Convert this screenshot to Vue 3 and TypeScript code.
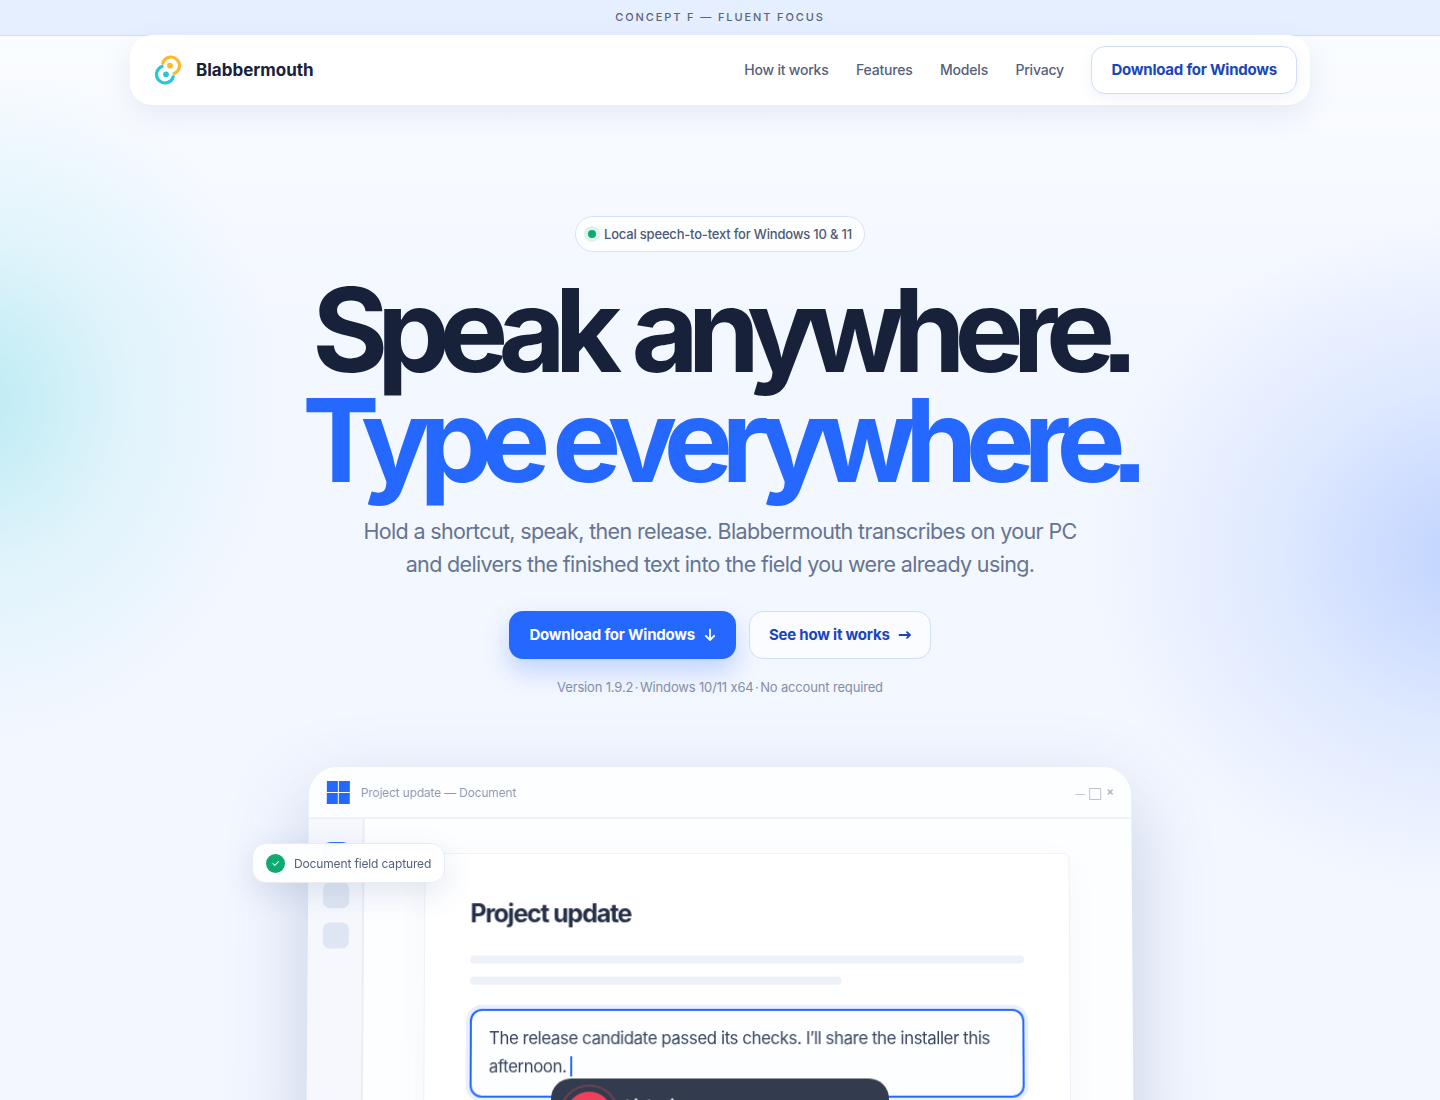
<template>
  <div class="page">
    <div class="strip">CONCEPT F — FLUENT FOCUS</div>

    <header class="nav">
      <a class="brand" href="#">
        <svg class="logo" width="28" height="30" viewBox="0 0 28 30" fill="none">
          <path d="M8.8 8.2A8.5 8.5 0 1 1 20 18.5" stroke="#fdb92e" stroke-width="3.2" stroke-linecap="round" />
          <circle cx="16" cy="10.7" r="2.9" fill="#fdb92e" />
          <path d="M8 11.5A8.5 8.5 0 1 0 19.2 21.8" stroke="#27c6dc" stroke-width="3.2" stroke-linecap="round" />
          <circle cx="12" cy="19.3" r="2.9" fill="#27c6dc" />
        </svg>
        <span>Blabbermouth</span>
      </a>
      <nav class="links">
        <a v-for="link in links" :key="link" class="link" href="#">{{ link }}</a>
        <a class="nav-cta" href="#">Download for Windows</a>
      </nav>
    </header>

    <section class="hero">
      <div class="pill"><span class="dot"></span>Local speech-to-text for Windows 10 &amp; 11</div>
      <h1>Speak anywhere<span class="stop">.</span><br /><em>Type everywhere<span class="stop">.</span></em></h1>
      <p class="lede">
        Hold a shortcut, speak, then release. Blabbermouth transcribes on your PC<br />
        and delivers the finished text into the field you were already using.
      </p>
      <div class="actions">
        <a class="btn primary" href="#">
          Download for Windows
          <svg width="14" height="14" viewBox="0 0 14 14" fill="none" stroke="currentColor" stroke-width="1.8" stroke-linecap="round" stroke-linejoin="round"><path d="M7 1.5v10.5M2.8 7.8 7 12l4.2-4.2" /></svg>
        </a>
        <a class="btn secondary" href="#">
          See how it works
          <svg width="14" height="14" viewBox="0 0 14 14" fill="none" stroke="currentColor" stroke-width="1.8" stroke-linecap="round" stroke-linejoin="round"><path d="M1.5 7h10.5M9 4.2 12 7 9 9.8" /></svg>
        </a>
      </div>
      <p class="meta">Version 1.9.2 <span class="sep">·</span> Windows 10/11 x64 <span class="sep">·</span> No account required</p>
    </section>

    <section class="stage">
      <div class="window">
        <div class="titlebar">
          <span class="win-logo"><i></i><i></i><i></i><i></i></span>
          <span class="win-title">Project update — Document</span>
          <span class="controls"><i class="min"></i><i class="max"></i><i class="close">×</i></span>
        </div>
        <div class="body">
          <aside class="side">
            <span class="side-item active"></span>
            <span class="side-item"></span>
            <span class="side-item"></span>
          </aside>
          <main class="main">
            <div class="doc">
              <h2>Project update</h2>
              <div class="bar"></div>
              <div class="bar short"></div>
              <div class="field">
                The release candidate passed its checks. I’ll share the installer this afternoon.<span class="caret"></span>
              </div>
            </div>
          </main>
        </div>
        <div class="voice">
          <span class="rec"><i></i></span>
          <span class="voice-label">Listening</span>
        </div>
      </div>
      <div class="toast"><span class="tick">✓</span>Document field captured</div>
    </section>
  </div>
</template>

<script setup lang="ts">
const links: string[] = ['How it works', 'Features', 'Models', 'Privacy'];
</script>

<style>
html,
body {
  margin: 0;
  background: #f3f7ff;
  overflow-x: hidden;
}
</style>

<style scoped>
.page {
  min-height: 1100px;
  height: 1100px;
  overflow: hidden;
  font-family: Inter, 'Liberation Sans', sans-serif;
  color: #17213a;
  background:
    radial-gradient(ellipse 300px 340px at -20px 400px, rgba(170, 232, 240, 0.75), rgba(170, 232, 240, 0.25) 50%, rgba(170, 232, 240, 0) 100%),
    radial-gradient(ellipse 380px 340px at 1470px 555px, rgba(186, 207, 255, 0.9), rgba(186, 207, 255, 0.36) 50%, rgba(186, 207, 255, 0) 100%),
    linear-gradient(180deg, #fbfdff 0%, #f3f7ff 30%, #f3f7ff 100%);
}

a {
  text-decoration: none;
  color: inherit;
}

.strip {
  height: 35px;
  line-height: 34px;
  background: #e6efff;
  border-bottom: 1px solid #d5e0f3;
  text-align: center;
  font-size: 11px;
  font-weight: 500;
  letter-spacing: 0.172em;
  color: #58657f;
}

.nav {
  width: 1180px;
  height: 70px;
  margin: -1px auto 0;
  padding: 0 13px 0 24px;
  box-sizing: border-box;
  display: flex;
  align-items: center;
  justify-content: space-between;
  background: #fff;
  border-radius: 22px;
  box-shadow: 0 10px 30px rgba(60, 90, 150, 0.1);
  position: relative;
}

.brand {
  display: flex;
  align-items: center;
  gap: 14px;
  font-size: 17px;
  font-weight: 700;
  color: #17213a;
}

.links {
  display: flex;
  align-items: center;
  gap: 27.5px;
  font-size: 14px;
  font-weight: 500;
  letter-spacing: -0.015em;
  color: #55617b;
}

.link {
  padding-bottom: 2px;
}

.nav-cta {
  height: 48px;
  padding: 0 19px 2px;
  display: flex;
  align-items: center;
  box-sizing: border-box;
  border: 1px solid #cfdefc;
  border-radius: 14px;
  font-size: 15px;
  font-weight: 700;
  letter-spacing: -0.015em;
  color: #1746bd;
  background: #fff;
  box-shadow: 0 4px 14px rgba(60, 90, 150, 0.07);
}

.hero {
  display: flex;
  flex-direction: column;
  align-items: center;
  padding-top: 111px;
}

.pill {
  height: 36px;
  padding: 0 12px 0 8px;
  box-sizing: border-box;
  display: flex;
  align-items: center;
  gap: 4px;
  border: 1px solid #d5e2fb;
  border-radius: 18px;
  background: #fdfeff;
  font-size: 13px;
  font-weight: 500;
  letter-spacing: -0.015em;
  color: #4d5a75;
}

.dot {
  width: 8px;
  height: 8px;
  margin: 0 4px;
  border-radius: 50%;
  background: #10a971;
  box-shadow: 0 0 0 4px #dff3ee;
}

h1 {
  margin: 23px 0 0;
  font-size: 116px;
  line-height: 110px;
  font-weight: 700;
  letter-spacing: -0.095em;
  word-spacing: 4px;
  text-align: center;
  color: #17213a;
  font-feature-settings: 'ss07';
}

h1 em {
  font-style: normal;
  letter-spacing: -0.098em;
  word-spacing: -3px;
  color: #2468ff;
}

.stop {
  margin-left: -4px;
}

.lede {
  margin: 20px 0 0;
  font-size: 21.5px;
  line-height: 33px;
  letter-spacing: -0.03em;
  text-align: center;
  color: #667490;
}

.actions {
  display: flex;
  gap: 13px;
  margin-top: 30px;
}

.btn {
  height: 48px;
  padding: 0 19px 1px 20px;
  box-sizing: border-box;
  display: flex;
  align-items: center;
  gap: 8px;
  border-radius: 14px;
  font-size: 15px;
  font-weight: 700;
  letter-spacing: -0.015em;
}

.primary {
  background: #2468ff;
  color: #fff;
  box-shadow: 0 12px 26px rgba(36, 104, 255, 0.25);
}

.secondary {
  padding: 0 18px 1px 19px;
  background: #fbfcff;
  color: #1746bd;
  border: 1px solid #cfdefc;
}

.meta {
  margin: 19px 0 0;
  font-size: 13px;
  line-height: 18px;
  letter-spacing: -0.012em;
  color: #838ea3;
}

.sep {
  margin: 0 -2px;
}

.stage {
  width: 822px;
  margin: 71px auto 0;
  position: relative;
}

.window {
  height: 640px;
  position: relative;
  box-sizing: border-box;
  background: #fdfeff;
  border-radius: 28px 28px 0 0;
  box-shadow: 0 30px 80px rgba(60, 90, 150, 0.26);
  transform: perspective(2000px) rotateX(2deg);
  transform-origin: 50% 0;
  display: flex;
  flex-direction: column;
}

.titlebar {
  height: 52px;
  flex: none;
  display: flex;
  align-items: center;
  padding: 0 17px 0 18px;
  box-sizing: border-box;
  border-bottom: 2px solid #eef1f8;
}

.win-logo {
  width: 23px;
  height: 23px;
  margin-top: 1px;
  display: grid;
  grid-template-columns: 1fr 1fr;
  gap: 1.5px;
}

.win-logo i {
  background: #2468ff;
}

.win-title {
  margin-left: 11px;
  font-size: 12px;
  letter-spacing: -0.015em;
  color: #8f99ad;
}

.controls {
  margin-left: auto;
  margin-top: 3px;
  display: flex;
  align-items: center;
  gap: 4px;
  color: #aab3c4;
}

.min {
  width: 10px;
  height: 1px;
  margin-top: 2px;
  background: #c3cad6;
}

.max {
  width: 10px;
  height: 10px;
  border: 1px solid #bcc4d2;
}

.close {
  font-style: normal;
  font-size: 12px;
  font-weight: 600;
  line-height: 10px;
  margin-top: -5px;
  margin-left: 1px;
}

.body {
  flex: 1;
  display: flex;
}

.side {
  width: 56px;
  flex: none;
  box-sizing: border-box;
  padding: 23px 0 0 2px;
  display: flex;
  flex-direction: column;
  align-items: center;
  gap: 14px;
  background: #f6f8fd;
  border-right: 2px solid #e9edf6;
}

.side-item {
  width: 26px;
  height: 26px;
  border-radius: 7px;
  background: #dfe6f3;
}

.side-item.active {
  background: #e6eefe;
  box-shadow: inset 2px 2px 0 #2468ff;
}

.main {
  flex: 1;
  padding: 34px 62px 0 60px;
  background: #fdfeff;
}

.doc {
  height: 100%;
  padding: 37px 45px 0;
  box-sizing: border-box;
  background: #fff;
  border: 1px solid #eef1f8;
  border-radius: 6px 6px 0 0;
  box-shadow: 0 10px 30px rgba(60, 90, 150, 0.05);
}

h2 {
  margin: 0;
  font-size: 25px;
  line-height: 44px;
  font-weight: 700;
  letter-spacing: -0.05em;
  color: #263149;
}

.bar {
  height: 8px;
  border-radius: 4px;
  background: #edf1f8;
}

.doc h2 + .bar {
  margin-top: 20px;
}

.bar.short {
  width: 67%;
  margin-top: 13px;
}

.field {
  margin-top: 24px;
  height: 88px;
  padding: 14px 17px;
  box-sizing: border-box;
  border: 2px solid #2468ff;
  border-radius: 12px;
  box-shadow: 0 0 0 4px #e8effd;
  background: #fdfeff;
  font-size: 16.8px;
  line-height: 27.5px;
  letter-spacing: -0.025em;
  color: #38445c;
}

.caret {
  display: inline-block;
  width: 2px;
  height: 20px;
  margin-left: 4px;
  vertical-align: -4px;
  background: #2468ff;
}

.voice {
  position: absolute;
  left: 243px;
  top: 310px;
  width: 336px;
  height: 72px;
  box-sizing: border-box;
  padding-left: 8px;
  display: flex;
  align-items: center;
  gap: 6px;
  border-radius: 20px;
  background: #323c4e;
}

.rec {
  width: 60px;
  height: 60px;
  display: flex;
  align-items: center;
  justify-content: center;
  border: 2px solid #6f4152;
  border-radius: 50%;
  box-sizing: border-box;
}

.rec i {
  width: 46px;
  height: 46px;
  border-radius: 50%;
  background: #f2405a;
}

.voice-label {
  align-self: flex-start;
  margin-top: 18px;
  font-size: 15px;
  line-height: 18px;
  font-weight: 700;
  color: #fff;
}

.toast {
  position: absolute;
  left: -57px;
  top: 76px;
  width: 193px;
  height: 40px;
  box-sizing: border-box;
  display: flex;
  align-items: center;
  gap: 9px;
  padding-left: 13px;
  border: 1px solid #e6ebf5;
  border-radius: 14px;
  background: rgba(255, 255, 255, 0.92);
  backdrop-filter: blur(8px);
  box-shadow: 0 10px 30px rgba(60, 90, 150, 0.14);
  font-size: 12px;
  letter-spacing: -0.012em;
  color: #55617b;
}

.tick {
  width: 19px;
  height: 19px;
  flex: none;
  display: flex;
  align-items: center;
  justify-content: center;
  border-radius: 50%;
  background: #10a971;
  color: #fff;
  font-size: 10px;
}
</style>
